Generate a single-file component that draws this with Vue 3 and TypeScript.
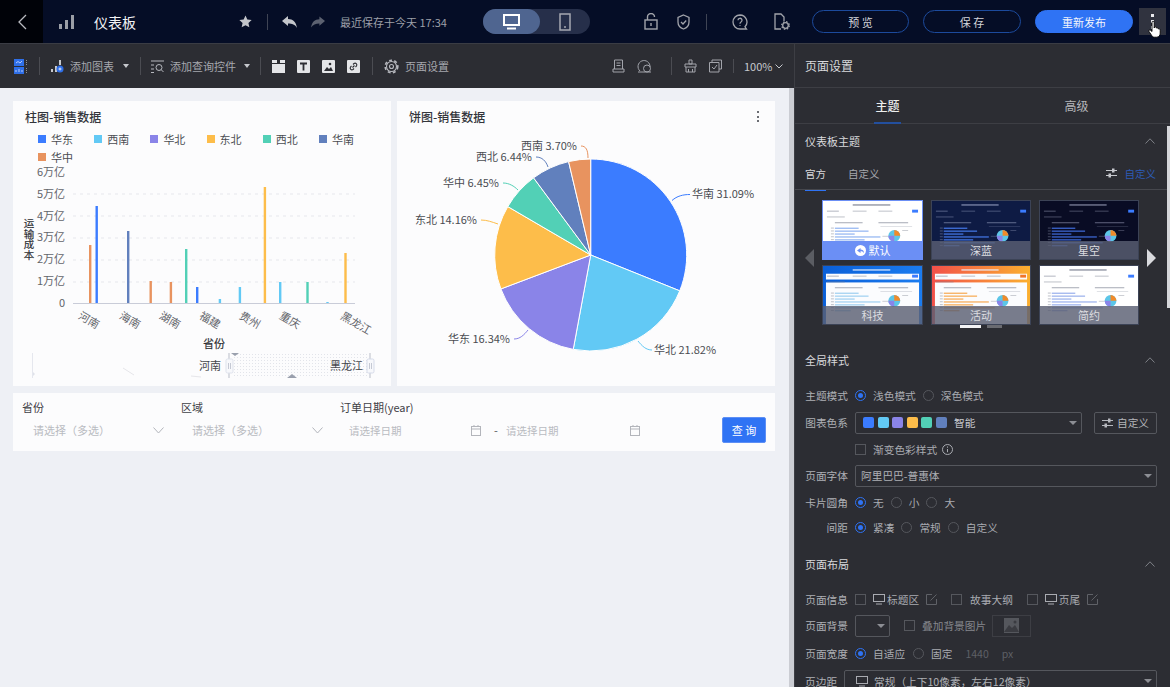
<template>
  <div class="page">
    <!-- 顶栏 -->
    <header class="topbar">
      <div class="back">
        <svg width="14" height="18" viewBox="0 0 14 18"><path d="M11 2 4 9l7 7" fill="none" stroke="#b9bbc1" stroke-width="1.300" /></svg>
      </div>
      <svg class="t-bars" width="16" height="14" viewBox="0 0 16 14" fill="#9b9ea6"><rect x="0" y="9" width="3" height="5" /><rect x="6" y="5" width="3" height="9" /><rect x="12" y="0" width="3" height="14" /></svg>
      <div class="t-title">仪表板</div>
      <svg class="t-star" width="13" height="13" viewBox="0 0 24 24" fill="#c4c6cb"><path d="M12 1l3.4 7.4 8 .9-6 5.4 1.7 8L12 18.700 4.900 22.700l1.700-8-6-5.400 8-.9z" /></svg>
      <i class="t-sep t-sep1"></i>
      <svg class="t-undo" width="15" height="12" viewBox="0 0 15 12" fill="#c4c6cb"><path d="M0 5 6 0v3c5 0 8 3 9 9-2-3.500-5-4.500-9-4.500V10z" /></svg>
      <svg class="t-redo" width="14" height="12" viewBox="0 0 15 12" fill="#5c6170"><path d="M15 5 9 0v3C4 3 1 6 0 12c2-3.500 5-4.500 9-4.500V10z" /></svg>
      <div class="t-saved">最近保存于今天 17:34</div>
      <div class="t-toggle">
        <div class="t-toggle-on">
          <svg width="17" height="16" viewBox="0 0 17 16" fill="none" stroke="#fff"><rect x="1" y="1" width="15" height="10" stroke-width="2" /><path d="M4 14.500h9" stroke-width="2" /></svg>
        </div>
        <div class="t-toggle-off">
          <svg width="12" height="18" viewBox="0 0 12 18" fill="none" stroke="#a6a9b2" stroke-width="1.500"><rect x="1" y="1" width="10" height="16" /><path d="M5 14h2" /></svg>
        </div>
      </div>
      <svg class="t-lock" width="14" height="17" viewBox="0 0 14 17" fill="none" stroke="#a2a4ab" stroke-width="1.400"><rect x="1" y="7" width="12" height="9" /><path d="M3.500 7V4a3.500 3.500 0 0 1 7 0M7 10v3" /></svg>
      <svg class="t-shield" width="13" height="16" viewBox="0 0 13 16" fill="none" stroke="#a2a4ab" stroke-width="1.300"><path d="M6.500 1 12 3.500V8c0 3.500-2.500 6-5.500 7C3.500 14 1 11.500 1 8V3.500z" /><path d="m4 8 2 2 3.200-3.500" /></svg>
      <i class="t-sep t-sep2"></i>
      <svg class="t-help" width="16" height="16" viewBox="0 0 16 16" fill="none" stroke="#a2a4ab" stroke-width="1.300"><path d="M8 1a7 7 0 1 0 0 14h6.500l-1.500-2.200A7 7 0 0 0 8 1z" /><path d="M6 6.300a2 2 0 1 1 3 1.700c-.7.400-1 .8-1 1.700M8 11.300v.8" /></svg>
      <svg class="t-doc" width="16" height="18" viewBox="0 0 16 18" fill="none" stroke="#a2a4ab" stroke-width="1.300"><path d="M7 16H1V1h6l3 3v4" /><circle cx="11.500" cy="12.500" r="2.800" /><circle cx="11.500" cy="12.500" r="3.800" stroke-dasharray="1.500 1.500" /></svg>
      <button class="t-btn t-preview">预 览</button>
      <button class="t-btn t-save">保 存</button>
      <button class="t-btn t-publish">重新发布</button>
      <div class="t-more"><i></i><i></i><i></i></div>
      <svg class="cursor" width="14" height="18" viewBox="0 0 14 18"><path d="M4 2.500c0-1.600 2.200-1.600 2.200 0V8l.4-1c1.200-.5 1.700.1 1.800 1 1-.5 1.700 0 1.800.9 1.100-.4 2 .2 2 1.300v3c0 2-1.300 4-3.500 4H6.500c-1.500 0-2.300-.8-3-2L1 11.500c-.6-1.300.8-2.100 1.800-1.100L4 11.500z" fill="#fff" stroke="#000" stroke-width=".9" /></svg>
    </header>

    <div class="body">
      <main class="main">
        <!-- 工具栏 -->
        <div class="toolbar">
          <svg class="b-layout" width="14" height="15" viewBox="0 0 14 15"><rect width="10" height="7" fill="#2f6fe8" /><rect y="8" width="10" height="7" fill="#2f6fe8" /><path d="M2 4l2-1.500L6 4l2-2M2 13v-2M5 13v-3M8 13v-2" stroke="#d6e2ff" fill="none" stroke-width=".8" /><path d="M12.500 1v5M12.500 9v5" stroke="#8a8d94" stroke-dasharray="1 1" /></svg>
          <i class="b-sep b-sep1"></i>
          <svg class="b-chart" width="13" height="14" viewBox="0 0 13 14"><path d="M1 10v3M5 7v6M9 1v5" stroke="#c6c8cd" stroke-width="2" /><circle cx="9" cy="10" r="3.500" fill="#2f6fe8" /><path d="M7.500 10h3M9 8.500v3" stroke="#fff" stroke-width=".8" /></svg>
          <span class="b-text b-text1">添加图表</span>
          <i class="caret b-caret1"></i>
          <i class="b-sep b-sep2"></i>
          <svg class="b-query" width="13" height="13" viewBox="0 0 13 13" fill="none" stroke="#b6b8be"><path d="M0 1h13M0 5h3M0 9h3M0 12.500h3" /><circle cx="8" cy="7.500" r="3" /><path d="m10.200 9.700 2.300 2.300" /></svg>
          <span class="b-text b-text2">添加查询控件</span>
          <i class="caret b-caret2"></i>
          <i class="b-sep b-sep3"></i>
          <svg class="b-ic1" width="13" height="13" viewBox="0 0 13 13" fill="#e4e5e8"><rect y="4" width="13" height="9" /><rect width="5" height="3" /><rect x="8" width="5" height="3" /></svg>
          <svg class="b-ic" width="13" height="13" viewBox="0 0 13 13"><rect width="13" height="13" rx="1" fill="#e4e5e8" /><path d="M3 3.500h7M6.500 3.500V10.500" stroke="#2c2d33" stroke-width="1.800" /></svg>
          <svg class="b-ic" width="13" height="13" viewBox="0 0 13 13"><rect width="13" height="13" rx="1" fill="#e4e5e8" /><path d="M2 11 5 7l2 2 2-2 2 4z" fill="#2c2d33" /><circle cx="8" cy="4" r="1.300" fill="#2c2d33" /></svg>
          <svg class="b-ic" width="13" height="13" viewBox="0 0 13 13"><rect width="13" height="13" rx="1" fill="#e4e5e8" /><path d="M5.500 7.500l2-2M4.500 6 3.500 7a1.800 1.800 0 0 0 2.500 2.500l1-1M8.500 7l1-1A1.800 1.800 0 0 0 7 3.500L6 4.500" stroke="#2c2d33" stroke-width="1.100" fill="none" /></svg>
          <i class="b-sep b-sep4"></i>
          <svg class="b-gear" width="15" height="15" viewBox="0 0 15 15" fill="none" stroke="#b6b8be"><circle cx="7.500" cy="7.500" r="5" stroke-width="1.100" /><circle cx="7.500" cy="7.500" r="6.300" stroke-width="1.600" stroke-dasharray="2.900 2.400" /><circle cx="7.500" cy="7.500" r="2" stroke-width="1.100" /></svg>
          <span class="b-text b-text3">页面设置</span>
          <svg class="b-r1" width="13" height="14" viewBox="0 0 13 14" fill="none" stroke="#a2a4ab"><path d="M2.500 10V1h8v9M1 13h11v-3H1zM4.500 4h4M4.500 6.500h4" /></svg>
          <svg class="b-r2" width="15" height="14" viewBox="0 0 15 14" fill="none" stroke="#a2a4ab"><path d="M3 12A6 6 0 1 1 13 8" /><circle cx="10" cy="9.500" r="3.500" /><path d="M1 13h13" /></svg>
          <i class="b-sep b-sep5"></i>
          <svg class="b-r3" width="13" height="14" viewBox="0 0 13 14" fill="none" stroke="#a2a4ab"><path d="M5 1h3v4H5zM1 5h11v3H1zM2 8v5h9V8M4.500 13v-3M8.500 13v-3" /></svg>
          <svg class="b-r4" width="13" height="14" viewBox="0 0 13 14" fill="none" stroke="#a2a4ab"><path d="M3 3V1h9.500v9H10M.5 3.500H10V13H.5zM3 8l2 2 3-4" /></svg>
          <i class="b-sep b-sep6"></i>
          <span class="b-zoom">100%</span>
          <svg class="b-zoomarrow" width="8" height="5" viewBox="0 0 8 5"><path d="m.5.500 3.500 3.500L7.500.500" fill="none" stroke="#c6c8cd" /></svg>
        </div>

        <div class="canvas">
          <div class="cards">
            <!-- 柱图 -->
            <section class="card">
              <h3 class="card-title">柱图-销售数据</h3>
              <div class="legend">
                <div v-for="l in legend" :key="l.name" class="legend-item">
                  <i :style="{ background: l.color }"></i><span>{{ l.name }}</span>
                </div>
              </div>
              <svg class="bar-chart" width="378" height="230" viewBox="13 156 378 230">
                <line v-for="y in [194, 216, 238, 260, 282]" :key="y" x1="73" x2="355" :y1="y" :y2="y" stroke="#e6e7ec" stroke-dasharray="3 4" />
                <text v-for="t in yTicks" :key="t.label" x="65" :y="t.y + 4" text-anchor="end" class="axis-text">{{ t.label }}</text>
                <line x1="73" x2="355" y1="303.500" y2="303.500" stroke="#c9ccd8" />
                <rect v-for="b in bars" :key="b.x" :x="b.x - 1" :y="b.top" width="2.400" :height="303 - b.top" :fill="b.color" />
                <text v-for="x in xLabels" :key="x.label" :x="x.x" :y="x.y" text-anchor="middle" class="axis-text" :transform="`rotate(30 ${x.x} ${x.y - 4})`">{{ x.label }}</text>
                <text x="29" y="218" class="axis-title axis-vert">运输成本</text>
                <text x="214" y="348" text-anchor="middle" class="axis-title">省份</text>
                <!-- 缩略轴 -->
                <line x1="32.500" x2="32.500" y1="353" y2="378" stroke="#e5e7ee" />
                <path d="m33 372 2 2-2 2z" fill="#dfe2ea" />
                <path d="m123 368 11 7M191 376l10 1" stroke="#e6e6ea" fill="none" />
                <rect x="233" y="353" width="136" height="24" fill="url(#dots)" />
                <defs>
                  <pattern id="dots" width="3" height="3" patternUnits="userSpaceOnUse"><rect width="1" height="1" fill="#e2e4ea" /></pattern>
                </defs>
                <path d="M231 353h8l-4 3zM287 378l5-4 5 4z" fill="#9aa0ad" />
                <line x1="229" x2="229" y1="353" y2="378" stroke="#b9bdc8" />
                <line x1="370" x2="370" y1="353" y2="378" stroke="#b9bdc8" />
                <text x="221" y="370" text-anchor="end" class="zoom-text">河南</text>
                <text x="363" y="370" text-anchor="end" class="zoom-text">黑龙江</text>
                <rect x="226" y="359" width="7" height="14" rx="1.500" fill="#f7f8fb" stroke="#dfe3ec" />
                <rect x="367" y="359" width="7" height="14" rx="1.500" fill="#f7f8fb" stroke="#d5dbe9" />
                <path d="M228.500 363v6M230.500 363v6M369.500 363v6M371.500 363v6" stroke="#c5c9d4" />
              </svg>
            </section>

            <!-- 饼图 -->
            <section class="card">
              <h3 class="card-title">饼图-销售数据</h3>
              <div class="card-more"><i></i><i></i><i></i></div>
              <svg class="pie-chart" width="378" height="285" viewBox="397 101 378 285">
                <path v-for="s in slices" :key="s.name" :d="s.d" :fill="s.color" stroke="#fff" stroke-width="1" />
                <path v-for="l in pieLabels" :key="l.text" :d="l.d" :stroke="l.color" fill="none" />
                <text v-for="l in pieLabels" :key="l.text + 't'" :x="l.x" :y="l.y" :text-anchor="l.anchor" class="pie-text">{{ l.text }}</text>
              </svg>
            </section>
          </div>

          <!-- 查询控件 -->
          <section class="filter">
            <div class="f-col">
              <div class="f-label">省份</div>
              <div class="f-input">
                <span>请选择（多选）</span>
                <svg width="11" height="7" viewBox="0 0 11 7"><path d="m.5.500 5 5.500 5-5.500" fill="none" stroke="#b3b5bb" /></svg>
              </div>
            </div>
            <div class="f-col">
              <div class="f-label">区域</div>
              <div class="f-input">
                <span>请选择（多选）</span>
                <svg width="11" height="7" viewBox="0 0 11 7"><path d="m.5.500 5 5.500 5-5.500" fill="none" stroke="#b3b5bb" /></svg>
              </div>
            </div>
            <div class="f-date">
              <div class="f-label">订单日期(year)</div>
              <div class="f-range">
                <span class="f-ph">请选择日期</span>
                <svg width="10" height="11" viewBox="0 0 10 11" fill="none" stroke="#b3b5bb"><rect x=".5" y="1.500" width="9" height="9" /><path d="M.5 4h9M3 0v2M7 0v2" /></svg>
                <b>-</b>
                <span class="f-ph">请选择日期</span>
                <svg width="10" height="11" viewBox="0 0 10 11" fill="none" stroke="#b3b5bb"><rect x=".5" y="1.500" width="9" height="9" /><path d="M.5 4h9M3 0v2M7 0v2" /></svg>
              </div>
            </div>
            <button class="f-btn">查 询</button>
          </section>
          <div class="canvas-scroll"></div>
        </div>
      </main>

      <!-- 页面设置面板 -->
      <aside class="panel">
        <div class="p-head">页面设置</div>
        <div class="p-tabs">
          <div class="p-tab on">主题</div>
          <div class="p-tab">高级</div>
        </div>
        <div class="sec-head sec-first">
          <span>仪表板主题</span>
          <svg width="10" height="6" viewBox="0 0 10 6"><path d="M.5 5.500 5 .8l4.500 4.700" fill="none" stroke="#7e8087" /></svg>
        </div>
        <div class="sub-tabs">
          <span class="sub-tab on">官方</span>
          <span class="sub-tab">自定义</span>
          <svg class="sub-ic" width="11" height="10" viewBox="0 0 11 10" fill="none" stroke="#c6c8cd"><path d="M0 2.500h11M0 7.500h11" /><rect x="6.500" y="1" width="1.500" height="3" fill="#c6c8cd" /><rect x="3" y="6" width="1.500" height="3" fill="#c6c8cd" /></svg>
          <span class="sub-link">自定义</span>
        </div>
        <div class="carousel">
          <svg class="arrow" width="9" height="18" viewBox="0 0 9 18"><path d="M9 0v18L0 9z" fill="#5b5d63" /></svg>
          <div class="thumbs">
            <div v-for="(t, idx) in themes" :key="t.name" class="thumb" :class="{ active: t.primary }">
              <svg width="100%" height="100%" viewBox="0 0 100 60" preserveAspectRatio="none">
                <defs v-if="t.from">
                  <linearGradient :id="`thumb-bg-${idx}`" x1="0" y1="0" x2="1" y2="0">
                    <stop offset="0" :stop-color="t.from" />
                    <stop offset="1" :stop-color="t.to" />
                  </linearGradient>
                </defs>
                <rect width="100" height="60" :fill="t.from ? `url(#thumb-bg-${idx})` : t.bg" />
                <rect v-if="t.from" x="3" y="8" width="94" height="6" fill="#fbfcfe" />
                <rect v-if="t.from" x="3" y="17" width="94" height="43" fill="#fbfcfe" />
                <rect x="30" y="3.500" width="38" height="1.200" :fill="t.from ? '#e9f0ff' : t.line" />
                <rect x="4" y="10" width="12" height="1" :fill="t.line" opacity=".6" />
                <rect x="30" y="10" width="14" height="1" :fill="t.line" opacity=".5" />
                <rect x="56" y="10" width="14" height="1" :fill="t.line" opacity=".5" />
                <rect x="90" y="9" width="6" height="3" :fill="t.btn" />
                <rect x="4" y="16" width="18" height="1" :fill="t.line" opacity=".5" />
                <rect x="12" y="22" width="28" height="1" :fill="t.line" opacity=".7" />
                <rect x="56" y="22" width="30" height="1" :fill="t.line" opacity=".7" />
                <rect x="58" y="26" width="32" height=".8" :fill="t.line" opacity=".3" />
                <rect v-for="i in 7" :key="'l' + i" x="8" :y="24.500 + i * 3" width="3" height="1" :fill="t.line" opacity=".5" />
                <rect v-for="(w, i) in thumbBars" :key="i" x="12" :y="27.500 + i * 3" :width="w" height="1.400" :fill="t.bar" />
                <rect x="60" y="36" width="6" height="1" :fill="t.line" opacity=".4" />
                <rect x="80" y="30" width="6" height="1" :fill="t.line" opacity=".4" />
                <circle cx="72" cy="36" r="6" fill="#5cc6e8" />
                <path d="M72 36V30A6 6 0 0 1 78 36z" fill="#f08a2a" />
                <path d="M72 36V42A6 6 0 0 1 66 36z" fill="#8a84e8" />
              </svg>
              <div class="thumb-band" :class="{ primary: t.primary }">
                <svg v-if="t.primary" width="11" height="11" viewBox="0 0 11 11"><circle cx="5.500" cy="5.500" r="5.500" fill="#fff" /><path d="M2 5.500 5.500 3v1.500c2 0 3.500 1 3.500 3.500-1-1.500-2-1.800-3.500-1.800V8z" fill="#6b8ff5" /></svg>
                {{ t.name }}
              </div>
            </div>
          </div>
          <svg class="arrow arrow-r" width="9" height="18" viewBox="0 0 9 18"><path d="M0 0v18l9-9z" fill="#d9dade" /></svg>
          <div class="pager"><i class="on"></i><i></i></div>
        </div>

        <div class="sec-head">
          <span>全局样式</span>
          <svg width="10" height="6" viewBox="0 0 10 6"><path d="M.5 5.500 5 .8l4.500 4.700" fill="none" stroke="#7e8087" /></svg>
        </div>
        <div class="rows">
          <div class="row">
            <label class="r-label">主题模式</label>
            <span class="radio on"></span><span class="r-text">浅色模式</span>
            <span class="radio"></span><span class="r-text">深色模式</span>
          </div>
          <div class="row">
            <label class="r-label">图表色系</label>
            <div class="select s-color">
              <i v-for="c in swatches" :key="c" class="swatch" :style="{ background: c }"></i>
              <span class="s-name">智能</span>
              <i class="caret s-caret"></i>
            </div>
            <div class="custom-btn">
              <svg width="11" height="10" viewBox="0 0 11 10" fill="none" stroke="#b6b8be"><path d="M0 2.500h11M0 7.500h11" /><rect x="6.500" y="1" width="1.500" height="3" fill="#b6b8be" /><rect x="3" y="6" width="1.500" height="3" fill="#b6b8be" /></svg>
              自定义
            </div>
          </div>
          <div class="row row-indent">
            <span class="check"></span><span class="r-text">渐变色彩样式</span>
            <svg class="info" width="11" height="11" viewBox="0 0 11 11" fill="none" stroke="#a9abb1"><circle cx="5.500" cy="5.500" r="5" /><path d="M5.500 5v3.200M5.500 2.500v1.200" /></svg>
          </div>
          <div class="row">
            <label class="r-label">页面字体</label>
            <div class="select s-wide"><span class="s-font">阿里巴巴-普惠体</span><i class="caret s-caret"></i></div>
          </div>
          <div class="row">
            <label class="r-label">卡片圆角</label>
            <span class="radio on"></span><span class="r-text">无</span>
            <span class="radio"></span><span class="r-text">小</span>
            <span class="radio"></span><span class="r-text">大</span>
          </div>
          <div class="row row-short">
            <label class="r-label">间距</label>
            <span class="radio on"></span><span class="r-text">紧凑</span>
            <span class="radio"></span><span class="r-text">常规</span>
            <span class="radio"></span><span class="r-text">自定义</span>
          </div>
        </div>

        <div class="sec-head sec-layout">
          <span>页面布局</span>
          <svg width="10" height="6" viewBox="0 0 10 6"><path d="M.5 5.500 5 .8l4.500 4.700" fill="none" stroke="#7e8087" /></svg>
        </div>
        <div class="rows rows-layout">
          <div class="row row-info">
            <label class="r-label">页面信息</label>
            <span class="check"></span>
            <svg class="mon" width="12" height="11" viewBox="0 0 12 11" fill="none" stroke="#a9abb1"><rect x=".5" y=".5" width="11" height="7" /><path d="M3 10h6" /></svg>
            <span class="r-text r-tight">标题区</span>
            <svg class="edit" width="11" height="11" viewBox="0 0 11 11" fill="none" stroke="#5f6167"><path d="M10.500 5v5.500H.5V.5H6M4.500 6.500l6-6" /></svg>
            <span class="check c-story"></span><span class="r-text r-story">故事大纲</span>
            <span class="check c-foot"></span>
            <svg class="mon" width="12" height="11" viewBox="0 0 12 11" fill="none" stroke="#a9abb1"><rect x=".5" y=".5" width="11" height="7" /><path d="M3 10h6" /></svg>
            <span class="r-text r-tight">页尾</span>
            <svg class="edit" width="11" height="11" viewBox="0 0 11 11" fill="none" stroke="#5f6167"><path d="M10.500 5v5.500H.5V.5H6M4.500 6.500l6-6" /></svg>
          </div>
          <div class="row">
            <label class="r-label">页面背景</label>
            <div class="select s-bg"><i class="caret s-caret"></i></div>
            <span class="check c-bg"></span><span class="r-text r-dim">叠加背景图片</span>
            <div class="img-box">
              <svg width="15" height="15" viewBox="0 0 15 15"><rect width="15" height="15" fill="#55575d" /><path d="M0 14 5 7l3 3 3-3 4 7z" fill="#3a3b41" /><circle cx="11" cy="4" r="1.500" fill="#3a3b41" /></svg>
            </div>
          </div>
          <div class="row row-tall">
            <label class="r-label">页面宽度</label>
            <span class="radio on"></span><span class="r-text">自适应</span>
            <span class="radio r-mid"></span><span class="r-text">固定</span>
            <span class="w-val">1440</span><span class="w-px">px</span>
          </div>
          <div class="row row-last">
            <label class="r-label r-label-s">页边距</label>
            <div class="select s-margin">
              <svg width="12" height="11" viewBox="0 0 12 11" fill="none" stroke="#a9abb1"><rect x=".5" y=".5" width="11" height="7" /><path d="M3 10h6" /></svg>
              <span class="s-font">常规（上下10像素，左右12像素）</span>
              <i class="caret s-caret"></i>
            </div>
          </div>
        </div>
        <div class="panel-scroll"></div>
      </aside>
    </div>
  </div>
</template>

<script setup lang="ts">
interface Slice {
  name: string
  pct: number
  color: string
}

const C = {
  blue: '#3b7cff',
  sky: '#62c9f5',
  purple: '#8a84e8',
  yellow: '#fdbd4a',
  green: '#52d0b6',
  slate: '#6180bd',
  orange: '#e8935f'
}

const legend = [
  { name: '华东', color: C.blue },
  { name: '西南', color: C.sky },
  { name: '华北', color: C.purple },
  { name: '东北', color: C.yellow },
  { name: '西北', color: C.green },
  { name: '华南', color: C.slate },
  { name: '华中', color: C.orange }
]
const swatches = [C.blue, C.sky, C.purple, C.yellow, C.green, C.slate]

const yTicks = ['6万亿', '5万亿', '4万亿', '3万亿', '2万亿', '1万亿', '0'].map((label, i) => ({
  label,
  y: 172 + i * 21.83
}))

const bars = [
  { x: 90, top: 245, color: C.orange },
  { x: 96.5, top: 206, color: C.blue },
  { x: 128, top: 231, color: C.slate },
  { x: 150.5, top: 281, color: C.orange },
  { x: 170.7, top: 282, color: C.orange },
  { x: 186, top: 249, color: C.green },
  { x: 197, top: 287, color: C.blue },
  { x: 219.7, top: 299, color: C.sky },
  { x: 239.7, top: 287, color: C.sky },
  { x: 264.7, top: 187, color: C.yellow },
  { x: 280, top: 282, color: C.sky },
  { x: 307.3, top: 282, color: C.green },
  { x: 327.3, top: 302, color: C.sky },
  { x: 345.3, top: 253, color: C.yellow }
]

const xLabels = [
  { label: '河南', x: 89, y: 324 },
  { label: '海南', x: 130, y: 324 },
  { label: '湖南', x: 170, y: 324 },
  { label: '福建', x: 210, y: 324 },
  { label: '贵州', x: 250, y: 324 },
  { label: '重庆', x: 290, y: 324 },
  { label: '黑龙江', x: 356, y: 327 }
]

// 饼图扇区，从12点方向顺时针
const pieData: Slice[] = [
  { name: '华南', pct: 31.09, color: C.blue },
  { name: '华北', pct: 21.82, color: C.sky },
  { name: '华东', pct: 16.34, color: C.purple },
  { name: '东北', pct: 14.16, color: C.yellow },
  { name: '华中', pct: 6.45, color: C.green },
  { name: '西北', pct: 6.44, color: C.slate },
  { name: '西南', pct: 3.7, color: C.orange }
]
const cx = 590.7
const cy = 255
const r = 96
let acc = 0
const point = (p: number) => {
  const a = (p / 100) * Math.PI * 2
  return `${cx + r * Math.sin(a)} ${cy - r * Math.cos(a)}`
}
const slices = pieData.map((s) => {
  const from = point(acc)
  acc += s.pct
  const to = point(acc)
  return { ...s, d: `M${cx} ${cy}L${from}A${r} ${r} 0 ${s.pct > 50 ? 1 : 0} 1 ${to}Z` }
})

const pieLabels = [
  { text: '华南 31.09%', x: 692, y: 198, anchor: 'start', color: C.blue, d: 'M672 200.500C677 196 683 194.500 690 194.500' },
  { text: '华北 21.82%', x: 654, y: 354, anchor: 'start', color: C.sky, d: 'M638 341C642 346 646 350 652 350' },
  { text: '华东 16.34%', x: 510, y: 343, anchor: 'end', color: C.purple, d: 'M528 330C524 335 520 339 514 339' },
  { text: '东北 14.16%', x: 477, y: 224, anchor: 'end', color: C.yellow, d: 'M481 220C487 220 492 222 498 224' },
  { text: '华中 6.45%', x: 499, y: 187, anchor: 'end', color: C.green, d: 'M503 183C509 183 514 186 518 190' },
  { text: '西北 6.44%', x: 532, y: 161, anchor: 'end', color: C.slate, d: 'M536 157C542 157 546 161 548 167' },
  { text: '西南 3.70%', x: 577, y: 150, anchor: 'end', color: C.orange, d: 'M581 146C586 146 588 150 588 158' }
]

const thumbBars = [24, 34, 20, 46, 30, 52, 16]
const themes = [
  { name: '默认', bg: '#ffffff', line: '#7c8192', bar: '#9dbcf3', btn: '#3b7cff', primary: true },
  { name: '深蓝', bg: '#0e1b44', line: '#8a94b5', bar: '#3f6fd8', btn: '#3b7cff' },
  { name: '星空', bg: '#090c24', line: '#8a8fa8', bar: '#3a62c8', btn: '#3b7cff' },
  { name: '科技', bg: '#0a62d8', from: '#0a5fd8', to: '#1b7cf0', line: '#7c8192', bar: '#a8d4f2', btn: '#3b7cff' },
  { name: '活动', bg: '#f8a02e', from: '#f2504a', to: '#fbb02f', line: '#7c8192', bar: '#f7b264', btn: '#f0762a' },
  { name: '简约', bg: '#ffffff', line: '#7c8192', bar: '#a4b8ee', btn: '#3b7cff' }
]
</script>

<style>
html, body { margin: 0; overflow: hidden; }
</style>

<style scoped>
* { box-sizing: border-box; }
.page { width: 1170px; height: 687px; overflow: hidden; display: flex; flex-direction: column; position: relative; font-family: "Noto Sans CJK SC", "Noto Sans", sans-serif; font-size: 11px; color: #b5b6ba; }
.topbar { height: 44px; flex: none; display: flex; align-items: center; background: #050d26; border-bottom: 1px solid #3a3c44; position: relative; }
.topbar > svg { flex: none; }
.back { width: 43px; height: 43px; background: #000208; display: flex; align-items: center; justify-content: center; flex: none; }
.t-bars { margin-left: 16px; }
.t-title { margin-left: 19px; width: 42px; font-size: 14px; color: #f2f3f5; flex: none; }
.t-star { margin-left: 103px; }
.t-sep { width: 1px; height: 16px; background: #3f4454; flex: none; }
.t-sep1 { margin-left: 15px; }
.t-undo { margin-left: 14px; }
.t-redo { margin-left: 14px; }
.t-saved { margin-left: 15px; width: 107px; color: #9da0a9; font-size: 11px; white-space: nowrap; flex: none; }
.t-toggle { margin-left: 36px; width: 107px; height: 25px; border-radius: 13px; background: #262f4a; display: flex; flex: none; }
.t-toggle-on { width: 57px; height: 25px; border-radius: 13px; background: #4f6590; display: flex; align-items: center; justify-content: center; }
.t-toggle-off { flex: 1; display: flex; align-items: center; justify-content: center; }
.t-lock { margin-left: 54px; }
.t-shield { margin-left: 19px; }
.t-sep2 { margin-left: 16px; }
.t-help { margin-left: 25px; }
.t-doc { margin-left: 26px; }
.t-btn { height: 23px; width: 97px; border-radius: 12px; border: 1px solid #1c4a9c; background: transparent; color: #d4d6db; font: 11px "Noto Sans CJK SC", sans-serif; flex: none; padding: 0; }
.t-preview { margin-left: 22px; }
.t-save { margin-left: 14px; width: 98px; }
.t-publish { margin-left: 14px; width: 98px; background: #2f73f4; border-color: #2f73f4; color: #f4f6fb; }
.t-more { margin-left: 6px; width: 27px; height: 27px; background: #30333f; display: flex; flex-direction: column; align-items: center; justify-content: center; gap: 3px; flex: none; }
.t-more i { width: 3px; height: 3px; background: #e8e9ec; }
.cursor { position: absolute; left: 1148px; top: 20px; }

.body { flex: 1; display: flex; min-height: 0; }
.main { width: 794px; flex: none; display: flex; flex-direction: column; }
.toolbar { height: 44px; flex: none; background: #2c2d33; display: flex; align-items: center; }
.toolbar > svg { flex: none; }
.b-sep { width: 1px; height: 18px; background: #4b4c52; flex: none; }
.b-layout { margin-left: 14px; }
.b-sep1 { margin-left: 11px; }
.b-chart { margin-left: 11px; }
.b-text { color: #a6a8ae; font-size: 11px; white-space: nowrap; flex: none; }
.b-text1 { margin-left: 6px; width: 44px; }
.caret { width: 0; height: 0; border-left: 3.5px solid transparent; border-right: 3.5px solid transparent; border-top: 4px solid #c6c8cd; flex: none; display: block; }
.b-caret1 { margin-left: 9px; }
.b-sep2 { margin-left: 11px; }
.b-query { margin-left: 10px; }
.b-text2 { margin-left: 6px; width: 65px; }
.b-caret2 { margin-left: 9px; }
.b-sep3 { margin-left: 10px; }
.b-ic1 { margin-left: 11px; }
.b-ic { margin-left: 12px; }
.b-sep4 { margin-left: 12px; }
.b-gear { margin-left: 11px; }
.b-text3 { margin-left: 6px; width: 44px; }
.b-r1 { margin-left: 163px; }
.b-r2 { margin-left: 12px; }
.b-sep5 { margin-left: 19px; }
.b-r3 { margin-left: 12px; }
.b-r4 { margin-left: 12px; }
.b-sep6 { margin-left: 11px; height: 14px; }
.b-zoom { margin-left: 10px; width: 30px; color: #c6c8cd; font-size: 11px; flex: none; }
.b-zoomarrow { margin-left: 1px; }

.canvas { flex: 1; background: #eef0f5; padding: 13px 0 0 13px; position: relative; min-height: 0; }
.canvas-scroll { position: absolute; right: 0; top: 0; bottom: 0; width: 5px; background: #cbcdd3; }
.cards { display: flex; gap: 6px; }
.card { width: 378px; height: 285px; background: #fcfcfd; position: relative; flex: none; display: flex; flex-direction: column; }
.card-title { margin: 7px 0 0 12px; font-size: 12px; line-height: 17px; font-weight: 500; color: #33353b; height: 17px; }
.legend { margin: 5px 0 0 25px; width: 340px; height: 39px; display: flex; flex-wrap: wrap; align-content: flex-start; }
.legend-item { width: 56.2px; height: 18px; display: flex; align-items: center; gap: 5px; font-size: 11px; line-height: 1; color: #4a4c52; }
.legend-item i { width: 8px; height: 8px; display: block; }
.bar-chart { position: absolute; left: 0; top: 55px; }
.pie-chart { position: absolute; left: 0; top: 0; }
.axis-text { font-size: 11px; fill: #62646a; }
.axis-title { font-size: 11px; fill: #2a2c31; stroke: #2a2c31; stroke-width: .15px; }
.axis-vert { font-size: 10.500px; writing-mode: vertical-rl; text-orientation: upright; }
.zoom-text { font-size: 11px; fill: #44464c; }
.pie-text { font-size: 11px; fill: #4a4c52; }
.card-more { position: absolute; left: 360px; top: 10px; display: flex; flex-direction: column; gap: 2.5px; }
.card-more i { width: 2px; height: 2px; background: #6b6d73; display: block; }

.filter { margin-top: 7px; width: 762px; height: 58px; background: #fcfcfd; display: flex; padding: 7px 9px 0 9px; position: relative; }
.f-col { width: 159px; flex: none; }
.f-label { font-size: 11px; line-height: 15px; color: #3f4147; height: 15px; }
.f-input { margin-top: 7px; height: 16px; padding: 0 1px 0 11px; width: 143px; display: flex; align-items: center; justify-content: space-between; color: #b9bbc1; font-size: 11px; }
.f-date { flex: none; width: 310px; margin-left: 0; }
.f-range { margin-top: 7px; height: 16px; display: flex; align-items: center; color: #b9bbc1; }
.f-ph { margin-left: 9px; width: 122px; font-size: 10.500px; flex: none; }
.f-range svg { flex: none; }
.f-range b { margin: 0 0 0 13px; width: 3px; font-weight: 400; color: #55575c; flex: none; }
.f-range b + .f-ph { margin-left: 9px; width: 124px; }
.f-btn { margin-left: auto; margin-top: 17px; width: 44px; height: 26px; border: 1px solid #5d8ff5; border-radius: 2px; background: #2f73f4; color: #fff; font: 11px "Noto Sans CJK SC", sans-serif; padding: 0; flex: none; }

.panel { flex: 1; background: #2c2d33; border-left: 1px solid #3d3e44; position: relative; overflow: hidden; }
.p-head { height: 44px; padding-left: 10px; display: flex; align-items: center; font-size: 12px; color: #d8d9dc; border-bottom: 1px solid #3d3e44; }
.p-tabs { height: 36px; display: flex; border-bottom: 1px solid #3d3e44; }
.p-tab { flex: 1; display: flex; align-items: center; justify-content: center; font-size: 12px; color: #b5b6ba; position: relative; }
.p-tab:first-child { flex: none; width: 185px; }
.p-tab:last-child { flex: none; width: 193px; }
.p-tab.on { color: #eceded; font-weight: 500; }
.p-tab.on::after { content: ""; position: absolute; left: 79px; bottom: -1px; width: 27px; height: 2px; background: #234f9e; }
.sec-head { height: 30px; padding: 0 15px 0 10px; display: flex; align-items: center; justify-content: space-between; color: #d8d9dc; font-size: 11px; }
.sec-first { height: 33px; }
.sec-layout { margin-top: 11px; }
.sub-tabs { height: 33px; margin-right: 3px; padding: 0 11px 0 10px; display: flex; align-items: center; border-bottom: 1px solid #46474d; }
.sub-tab { font-size: 10.500px; color: #a6a8ae; height: 33px; line-height: 33px; margin-right: 22px; position: relative; }
.sub-tab.on { color: #d8d9dc; }
.sub-tab.on::after { content: ""; position: absolute; left: 0; right: 0; bottom: -1px; height: 1px; background: #2f73f4; }
.sub-ic { margin-left: auto; }
.sub-link { margin-left: 8px; color: #2c5bb5; font-size: 10.500px; }
.carousel { height: 155px; padding: 10px 0 0 10px; display: flex; align-items: flex-start; position: relative; }
.arrow { margin-top: 49px; flex: none; }
.thumbs { margin-left: 8px; width: 317px; display: grid; grid-template-columns: 101px 100px 100px; column-gap: 8px; row-gap: 5px; flex: none; }
.thumb { height: 60px; position: relative; overflow: hidden; border: 1px solid #3c4356; }
.thumb.active { border-color: #6b8ff5; }
.thumb svg { display: block; }
.thumb-band { position: absolute; left: 0; right: 0; bottom: 0; height: 18px; background: rgba(90, 95, 115, 0.82); color: #dcdde0; font-size: 11px; display: flex; align-items: center; justify-content: center; gap: 3px; }
.thumb-band.primary { background: #6b8ff5; color: #fff; }
.arrow-r { margin-left: 8px; }
.pager { position: absolute; left: 165px; top: 135px; display: flex; gap: 6px; }
.pager i { width: 15px; height: 3px; background: #6a6b71; display: block; }
.pager i.on { width: 21px; background: #f2f2f4; }

.rows { padding-top: 7px; }
.rows-layout { padding-top: 8px; }
.row { height: 27px; display: flex; align-items: center; }
.row-short { height: 22px; }
.row-tall { height: 29px; }
.row-last { height: 26px; }
.row-info { height: 25px; }
.row-indent { padding-left: 60px; height: 26px; }
.r-label { width: 43px; margin: 0 7px 0 10px; text-align: right; font-size: 10.700px; color: #aeb0b5; white-space: nowrap; flex: none; }
.r-label-s { width: 32px; margin-right: 7px; text-align: left; }
.radio { width: 11px; height: 11px; border-radius: 50%; border: 1px solid #55575d; flex: none; margin-right: 7px; position: relative; }
.radio.on { border-color: #2f73f4; }
.radio.on::after { content: ""; position: absolute; left: 2px; top: 2px; width: 5px; height: 5px; border-radius: 50%; background: #2f73f4; }
.r-text { font-size: 10.700px; color: #a9abb1; margin-right: 7px; white-space: nowrap; flex: none; }
.r-tight { margin-left: 2px; margin-right: 7px; }
.r-dim { color: #85878d; margin-right: 6px; }
.check { width: 11px; height: 11px; border: 1px solid #55575d; flex: none; margin-right: 7px; }
.info { margin-left: -2px; }
.select { height: 22px; border: 1px solid #55575d; border-radius: 2px; display: flex; align-items: center; position: relative; flex: none; }
.s-color { width: 227px; padding-left: 7px; gap: 3.5px; }
.swatch { width: 11px; height: 11px; border-radius: 2px; display: block; flex: none; }
.s-name { margin-left: 4px; color: #c6c8cd; font-size: 10.700px; }
.s-caret { margin-left: auto; margin-right: 4px; border-top-color: #8c8e94; border-left-width: 4px; border-right-width: 4px; border-top-width: 4.5px; }
.custom-btn { margin-left: 12px; width: 63px; height: 22px; border: 1px solid #55575d; border-radius: 2px; display: flex; align-items: center; justify-content: center; gap: 4px; font-size: 10.700px; color: #b5b6ba; flex: none; }
.s-wide { width: 302px; padding-left: 5px; }
.s-font { color: #aeb0b5; font-size: 10.700px; white-space: nowrap; }
.mon { flex: none; margin-right: 0; }
.edit { flex: none; margin-right: 14px; }
.c-story { margin-right: 8px; }
.r-story { margin-right: 14px; }
.s-bg { width: 35px; padding-left: 4px; }
.c-bg { margin-left: 14px; }
.img-box { width: 39px; height: 22px; border: 1px solid #3d3e44; display: flex; align-items: center; justify-content: center; flex: none; }
.r-mid { margin-left: 1px; }
.w-val { margin-left: 6px; color: #5e6066; font-size: 10.500px; flex: none; }
.w-px { margin-left: 13px; color: #5e6066; font-size: 10.500px; flex: none; }
.s-margin { width: 313px; padding-left: 11px; gap: 6px; margin-left: 0; }
.panel-scroll { position: absolute; right: 0; top: 82px; width: 3px; height: 182px; background: #d5d6da; }
</style>
